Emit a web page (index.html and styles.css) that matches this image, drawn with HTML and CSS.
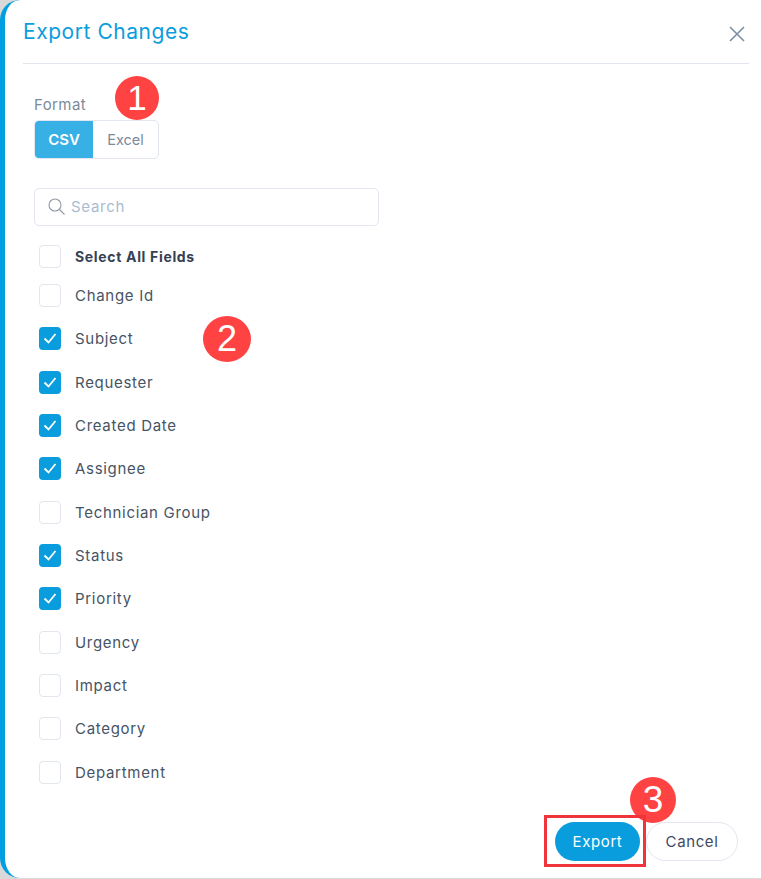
FILE: index.html
```html
<!DOCTYPE html>
<html lang="en">
<head>
    <meta charset="UTF-8">
    <meta name="viewport" content="width=device-width, initial-scale=1.0">
    <title>Export Changes</title>
    <link rel="stylesheet" href="styles.css">
</head>
<body>
<div class="panel">
    <div class="panel-header">
        <h3 class="panel-title">Export Changes</h3>
        <svg class="close" width="18" height="18" viewBox="0 0 18 18"><path d="M2 2 16 16M16 2 2 16" stroke="#7b8fa6" stroke-width="1.6" fill="none"/></svg>
    </div>

    <div class="format">
        <div class="format-label">Format</div>
        <div class="toggle">
            <span class="toggle-item active">CSV</span>
            <span class="toggle-item">Excel</span>
        </div>
    </div>

    <div class="search">
        <svg width="18" height="18" viewBox="0 0 18 18"><circle cx="7" cy="7" r="6" stroke="#8f9aa6" stroke-width="1.1" fill="none"/><path d="M11.5 11.5 16.5 16.5" stroke="#8f9aa6" stroke-width="1.1"/></svg>
        <span>Search</span>
    </div>

    <div class="fields">
        <div class="field select-all"><span class="box"></span><span>Select All Fields</span></div>
        <div class="field"><span class="box"></span><span>Change Id</span></div>
        <div class="field"><span class="box checked"><svg width="22" height="22" viewBox="0 0 22 22"><path d="M5.5 11.5 9.5 15.5 16.5 7" stroke="#fff" stroke-width="1.8" fill="none"/></svg></span><span>Subject</span></div>
        <div class="field"><span class="box checked"><svg width="22" height="22" viewBox="0 0 22 22"><path d="M5.5 11.5 9.5 15.5 16.5 7" stroke="#fff" stroke-width="1.8" fill="none"/></svg></span><span>Requester</span></div>
        <div class="field"><span class="box checked"><svg width="22" height="22" viewBox="0 0 22 22"><path d="M5.5 11.5 9.5 15.5 16.5 7" stroke="#fff" stroke-width="1.8" fill="none"/></svg></span><span>Created Date</span></div>
        <div class="field"><span class="box checked"><svg width="22" height="22" viewBox="0 0 22 22"><path d="M5.5 11.5 9.5 15.5 16.5 7" stroke="#fff" stroke-width="1.8" fill="none"/></svg></span><span>Assignee</span></div>
        <div class="field"><span class="box"></span><span>Technician Group</span></div>
        <div class="field"><span class="box checked"><svg width="22" height="22" viewBox="0 0 22 22"><path d="M5.5 11.5 9.5 15.5 16.5 7" stroke="#fff" stroke-width="1.8" fill="none"/></svg></span><span>Status</span></div>
        <div class="field"><span class="box checked"><svg width="22" height="22" viewBox="0 0 22 22"><path d="M5.5 11.5 9.5 15.5 16.5 7" stroke="#fff" stroke-width="1.8" fill="none"/></svg></span><span>Priority</span></div>
        <div class="field"><span class="box"></span><span>Urgency</span></div>
        <div class="field"><span class="box"></span><span>Impact</span></div>
        <div class="field"><span class="box"></span><span>Category</span></div>
        <div class="field"><span class="box"></span><span>Department</span></div>
    </div>

    <div class="actions">
        <button class="btn btn-primary">Export</button>
        <button class="btn btn-default">Cancel</button>
    </div>
</div>

<!-- annotations on top of the screenshot -->
<div class="badge badge-1">1</div>
<div class="badge badge-2">2</div>
<div class="badge badge-3">3</div>
<div class="highlight"></div>
</body>
</html>
```

FILE: styles.css
```css
html, body {
    height: 100%;
}
body {
    margin: 0;
    background: #d9d9d9;
    font-family: "Inter", "Liberation Sans", sans-serif;
    overflow: hidden;
}
.panel {
    box-sizing: border-box;
    height: 878px;
    background: #fff;
    border-left: 5px solid #009fdf;
    border-radius: 20px 0 0 20px;
    padding: 0 12px 0 18px;
    display: flex;
    flex-direction: column;
}
.panel-header {
    box-sizing: border-box;
    display: flex;
    justify-content: space-between;
    align-items: center;
    height: 64px;
    border-bottom: 1px solid #e1e5ee;
    flex-shrink: 0;
}
.panel-title {
    margin: 0;
    font-size: 21px;
    font-weight: 400;
    color: #0b9ddc;
    letter-spacing: 0.55px;
}
.close {
    margin-right: 3px;
    margin-top: 5px;
}
.format {
    display: flex;
    flex-direction: column;
    align-items: flex-start;
    padding: 31px 0 0 11px;
}
.format-label {
    font-size: 15px;
    line-height: 19px;
    height: 25px;
    color: #7c8a99;
    letter-spacing: 0.4px;
}
.toggle {
    display: flex;
    box-sizing: border-box;
    height: 39px;
    width: 125px;
    border: 1px solid #e1e6ef;
    border-radius: 5px;
    overflow: hidden;
    font-size: 14.5px;
}
.toggle-item {
    display: flex;
    align-items: center;
    justify-content: center;
    flex: 1;
    color: #7c8a99;
}
.toggle-item.active {
    flex: none;
    width: 58px;
    background: #36b0e5;
    color: #fff;
    font-size: 15px;
    font-weight: 600;
}
.search {
    box-sizing: border-box;
    display: flex;
    align-items: center;
    gap: 5px;
    width: 345px;
    height: 38px;
    margin: 29px 0 0 11px;
    padding-left: 13px;
    border: 1px solid #e1e6ef;
    border-radius: 5px;
    font-size: 15px;
    letter-spacing: 0.7px;
    color: #a9bccf;
}
.search span {
    margin-top: -2px;
}
.fields {
    margin: 12px 0 0 16px;
}
.field {
    display: flex;
    align-items: center;
    gap: 14px;
    height: 43.34px;
    font-size: 15px;
    letter-spacing: 0.7px;
    color: #465464;
}
.select-all {
    height: 36px;
    font-weight: 700;
    font-size: 14px;
    letter-spacing: 0.67px;
    color: #364153;
}
.box {
    box-sizing: border-box;
    width: 22px;
    height: 23px;
    border: 1px solid #e1e6ef;
    border-radius: 4px;
    flex-shrink: 0;
}
.box.checked {
    background: #0a9ddd;
    border: none;
}
.box svg {
    display: block;
}
.actions {
    display: flex;
    justify-content: flex-end;
    align-items: center;
    gap: 6px;
    margin-top: auto;
    padding: 0 11px 17px 0;
}
.btn {
    box-sizing: border-box;
    height: 39px;
    border-radius: 20px;
    font-family: "Inter", sans-serif;
    font-size: 15px;
    letter-spacing: 0.6px;
    padding: 0 0 1px;
}
.btn-primary {
    width: 85px;
    background: #0a9ddd;
    border: none;
    color: #fff;
}
.btn-default {
    width: 92px;
    background: #fff;
    border: 1px solid #e1e6ef;
    color: #3f4a63;
}
.badge {
    position: absolute;
    display: flex;
    align-items: center;
    justify-content: center;
    border-radius: 50%;
    background: #ff4242;
    color: #fff;
    font-family: "Liberation Sans", Arial, sans-serif;
}
.badge-1 {
    left: 115px;
    top: 76px;
    width: 44px;
    height: 44px;
    font-size: 35px;
}
.badge-2 {
    left: 203px;
    top: 316px;
    width: 48px;
    height: 46px;
    font-size: 36px;
}
.badge-3 {
    left: 630px;
    top: 777px;
    width: 46px;
    height: 46px;
    font-size: 37px;
}
.highlight {
    position: absolute;
    left: 544px;
    top: 815px;
    width: 96px;
    height: 46px;
    border: 3px solid #f0343c;
}
```
